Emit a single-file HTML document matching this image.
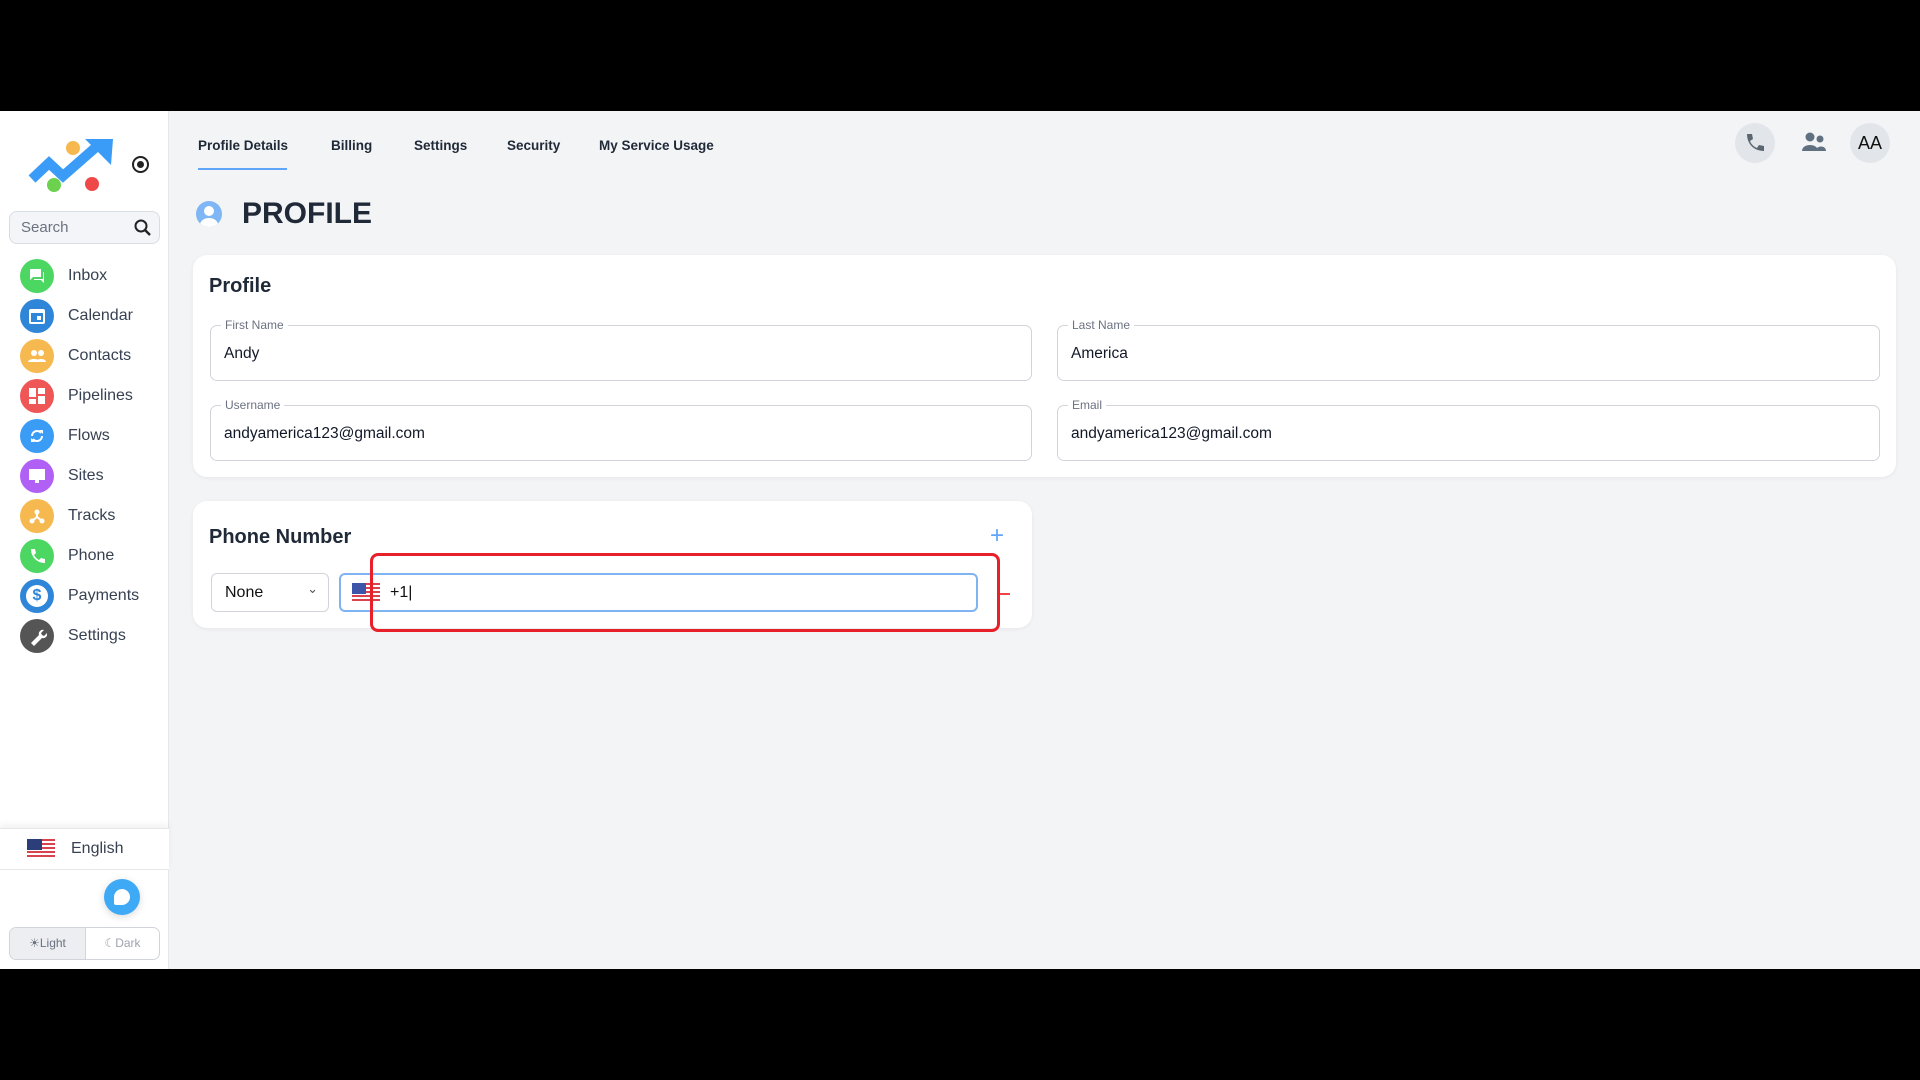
<!DOCTYPE html>
<html><head><meta charset="utf-8"><style>
*{box-sizing:border-box;margin:0;padding:0}
body{width:1920px;height:1080px;background:#000;font-family:"Liberation Sans",Arial,sans-serif;position:relative;overflow:hidden}
.app{position:absolute;left:0;top:111px;width:1920px;height:858px;background:#f3f4f6}
.side{position:absolute;left:0;top:0;width:169px;height:858px;background:#fff;border-right:1px solid #e5e7eb}
.nav{position:absolute;left:20px;display:flex;align-items:center;font-size:16px;color:#374151}
.nav .ic{width:34px;height:34px;border-radius:50%;margin-right:14px;display:flex;align-items:center;justify-content:center}
.tab{position:absolute;top:137px;font-size:13.5px;font-weight:bold;color:#1f2937}
.card{position:absolute;background:#fff;border-radius:14px;box-shadow:0 1px 4px rgba(0,0,0,.06)}
.fld{position:absolute;height:56px;border:1px solid #d1d5db;border-radius:7px;background:#fff}
.fld .lb{position:absolute;left:10px;top:-8px;background:#fff;padding:0 4px;font-size:12px;color:#6b7280}
.fld .v{position:absolute;left:13px;top:19px;font-size:15.5px;color:#111827}
</style></head><body>
<div class="app">
 <div class="side">
  <svg style="position:absolute;left:27px;top:26px" width="88" height="56" viewBox="0 0 88 56">
   <polyline points="5,42 22,26 36,39 68,11" fill="none" stroke="#3b9cf7" stroke-width="10" stroke-linejoin="miter"/>
   <polygon points="58,2 86,2 84,28" fill="#3b9cf7"/>
   <circle cx="46" cy="11" r="7" fill="#f6b94f"/><circle cx="27" cy="48" r="7" fill="#6cd14e"/><circle cx="65" cy="47" r="7" fill="#ef4848"/>
  </svg>
  <div style="position:absolute;left:132px;top:45px;width:17px;height:17px;border:2px solid #222;border-radius:50%"><div style="margin:3px;width:7px;height:7px;border-radius:50%;background:#222"></div></div>
  <div style="position:absolute;left:9px;top:100px;width:151px;height:33px;border:1px solid #d8dde3;border-radius:8px;background:#f3f5f8;font-size:15px;color:#6b7280;padding:7px 11px">Search
   <svg style="position:absolute;right:6px;top:6px" width="20" height="20" viewBox="0 0 20 20"><circle cx="8" cy="8" r="5.5" fill="none" stroke="#222" stroke-width="2"/><line x1="12" y1="12" x2="17" y2="17" stroke="#222" stroke-width="2.4"/></svg></div>
  <div class="nav" style="top:148px"><div class="ic" style="background:#4cd763"><svg width="18" height="18" viewBox="0 0 18 18"><path d="M2 2h11v8H5l-3 3z M15 5h1v11l-3-3H6v-1h9z" fill="#fff"/></svg></div>Inbox</div>
  <div class="nav" style="top:188px"><div class="ic" style="background:#2f86d8"><svg width="18" height="18"><rect x="2" y="3" width="14" height="13" rx="1" fill="none" stroke="#fff" stroke-width="2"/><rect x="9" y="9" width="4" height="4" fill="#fff"/><rect x="2" y="3" width="14" height="3" fill="#fff"/></svg></div>Calendar</div>
  <div class="nav" style="top:228px"><div class="ic" style="background:#f6b94f"><svg width="20" height="16"><circle cx="7" cy="5" r="3" fill="#fff"/><circle cx="14" cy="5" r="3" fill="#fff"/><path d="M1 14c0-4 12-4 12 0zM9 14c0-4 10-4 10 0z" fill="#fff"/></svg></div>Contacts</div>
  <div class="nav" style="top:268px"><div class="ic" style="background:#ef5656"><svg width="18" height="18"><rect x="1" y="1" width="7" height="9" fill="#fff"/><rect x="10" y="1" width="7" height="6" fill="#fff"/><rect x="1" y="12" width="7" height="5" fill="#fff"/><rect x="10" y="9" width="7" height="8" fill="#fff"/></svg></div>Pipelines</div>
  <div class="nav" style="top:308px"><div class="ic" style="background:#3a9cf5"><svg width="18" height="18"><path d="M4 9a5 5 0 0 1 9-3M14 9a5 5 0 0 1-9 3" fill="none" stroke="#fff" stroke-width="2"/><path d="M11 3h4v4z M7 15H3v-4z" fill="#fff"/></svg></div>Flows</div>
  <div class="nav" style="top:348px"><div class="ic" style="background:#b160f5"><svg width="20" height="18"><rect x="2" y="2" width="16" height="11" fill="#fff"/><rect x="8" y="13" width="4" height="3" fill="#fff"/></svg></div>Sites</div>
  <div class="nav" style="top:388px"><div class="ic" style="background:#f6b94f"><svg width="18" height="18"><circle cx="9" cy="5" r="2.5" fill="#fff"/><circle cx="4" cy="14" r="2.5" fill="#fff"/><circle cx="14" cy="14" r="2.5" fill="#fff"/><path d="M9 5v5L4 14M9 10l5 4" stroke="#fff" stroke-width="2" fill="none"/></svg></div>Tracks</div>
  <div class="nav" style="top:428px"><div class="ic" style="background:#4cd763"><svg width="18" height="18"><path d="M3 2l4 0 1 4-2 2c1 2 3 4 5 5l2-2 4 1v4c-8 0-14-6-14-14z" fill="#fff"/></svg></div>Phone</div>
  <div class="nav" style="top:468px"><div class="ic" style="background:#2f86d8"><div style="width:22px;height:22px;border-radius:50%;background:#fff;color:#2f86d8;font-weight:bold;font-size:16px;text-align:center;line-height:22px">$</div></div>Payments</div>
  <div class="nav" style="top:508px"><div class="ic" style="background:#555"><svg width="20" height="20"><path d="M4 17l8-8a4 4 0 0 1 5-5l-3 3 1 2 2 1 3-3a4 4 0 0 1-5 5l-8 8z" fill="#fff"/></svg></div>Settings</div>
  <div style="position:absolute;left:0;top:717px;width:169px;height:42px;border-top:1px solid #e5e7eb;border-bottom:1px solid #e5e7eb;box-shadow:0 -4px 6px rgba(0,0,0,.05);background:#fff">
   <svg style="position:absolute;left:27px;top:10px" width="28" height="20"><rect width="28" height="20" fill="#fff"/><g fill="#d9434d"><rect y="0" width="28" height="2"/><rect y="4" width="28" height="2"/><rect y="8" width="28" height="2"/><rect y="12" width="28" height="2"/><rect y="16" width="28" height="2"/></g><rect width="15" height="11" fill="#2c3e7a"/></svg>
   <span style="position:absolute;left:71px;top:11px;font-size:16px;color:#374151">English</span></div>
  <div style="position:absolute;left:104px;top:768px;width:36px;height:36px;border-radius:50%;background:#3ea9f5;box-shadow:0 2px 8px rgba(0,0,0,.15)"><div style="position:absolute;left:10px;top:10px;width:16px;height:16px;background:#fff;border-radius:50% 50% 50% 2px"></div></div>
  <div style="position:absolute;left:9px;top:816px;width:151px;height:33px;border:1px solid #d1d5db;border-radius:7px;display:flex;font-size:12px;color:#6b7280;overflow:hidden">
   <div style="width:76px;background:#eceef1;border-right:1px solid #d1d5db;text-align:center;line-height:31px">☀Light</div><div style="flex:1;text-align:center;line-height:31px;color:#9ca3af">☾Dark</div></div>
 </div>
 <div class="tab" style="left:198px;top:27px">Profile Details</div>
 <div style="position:absolute;left:198px;top:57px;width:89px;height:2px;background:#60a5fa"></div>
 <div class="tab" style="left:331px;top:27px">Billing</div>
 <div class="tab" style="left:414px;top:27px">Settings</div>
 <div class="tab" style="left:507px;top:27px">Security</div>
 <div class="tab" style="left:599px;top:27px">My Service Usage</div>
 <div style="position:absolute;left:1735px;top:12px;width:40px;height:40px;border-radius:50%;background:#e2e5e9"><svg style="margin:9px" width="22" height="22"><path d="M3 2l5 0 1 5-3 2c1 3 4 6 7 7l2-3 5 1v5C10 19 3 12 3 2z" fill="#5b6670"/></svg></div>
 <svg style="position:absolute;left:1801px;top:20px" width="26" height="22"><circle cx="9" cy="6" r="4.5" fill="#5f7080"/><circle cx="19" cy="8" r="3.5" fill="#5f7080"/><path d="M1 20c0-8 16-8 16 0zM15 20c0-6 10-6 10 0z" fill="#5f7080"/></svg>
 <div style="position:absolute;left:1850px;top:12px;width:40px;height:40px;border-radius:50%;background:#e2e5e9;font-size:18px;text-align:center;line-height:40px;color:#111">AA</div>
 <div style="position:absolute;left:196px;top:90px;width:26px;height:26px;border-radius:50%;background:#7fb6f5;overflow:hidden"><div style="position:absolute;left:8px;top:5px;width:10px;height:10px;border-radius:50%;background:#fff"></div><div style="position:absolute;left:4px;top:17px;width:18px;height:14px;border-radius:50%;background:#fff"></div></div>
 <div style="position:absolute;left:242px;top:86px;font-size:30px;font-weight:bold;color:#1f2937">PROFILE</div>
 <div class="card" style="left:193px;top:144px;width:1703px;height:222px">
  <div style="position:absolute;left:16px;top:20px;font-size:20px;font-weight:bold;color:#1f2937">Profile</div>
  <div class="fld" style="left:17px;top:70px;width:822px"><span class="lb">First Name</span><span class="v">Andy</span></div>
  <div class="fld" style="left:864px;top:70px;width:823px"><span class="lb">Last Name</span><span class="v">America</span></div>
  <div class="fld" style="left:17px;top:150px;width:822px"><span class="lb">Username</span><span class="v">andyamerica123@gmail.com</span></div>
  <div class="fld" style="left:864px;top:150px;width:823px"><span class="lb">Email</span><span class="v">andyamerica123@gmail.com</span></div>
 </div>
 <div class="card" style="left:193px;top:390px;width:839px;height:127px">
  <div style="position:absolute;left:16px;top:25px;font-size:20px;font-weight:bold;color:#1f2937">Phone Number</div>
  <div style="position:absolute;left:797px;top:23px;font-size:24px;color:#60a5fa;line-height:24px">+</div>
  <div style="position:absolute;left:18px;top:72px;width:118px;height:39px;border:1px solid #d1d5db;border-radius:6px;font-size:16px;color:#111;padding:10px 13px">None<span style="position:absolute;right:10px;top:7px;font-size:13px;color:#555">&#8964;</span></div>
  <div style="position:absolute;left:146px;top:72px;width:639px;height:39px;border:2px solid #7fb3f3;border-radius:6px">
   <svg style="position:absolute;left:11px;top:8px" width="28" height="20"><rect width="28" height="20" fill="#fff"/><g fill="#d9434d"><rect y="0" width="28" height="2"/><rect y="4" width="28" height="2"/><rect y="8" width="28" height="2"/><rect y="12" width="28" height="2"/><rect y="16" width="28" height="2"/></g><rect width="14" height="11" fill="#3c55a8"/></svg>
   <span style="position:absolute;left:49px;top:9px;font-size:16px;color:#111">+1|</span></div>
  <div style="position:absolute;left:807px;top:92px;width:10px;height:2px;background:#ef4444"></div>
 </div>
 <div style="position:absolute;left:370px;top:442px;width:630px;height:79px;border:3px solid #e8202a;border-radius:8px"></div>
</div>
</body></html>
